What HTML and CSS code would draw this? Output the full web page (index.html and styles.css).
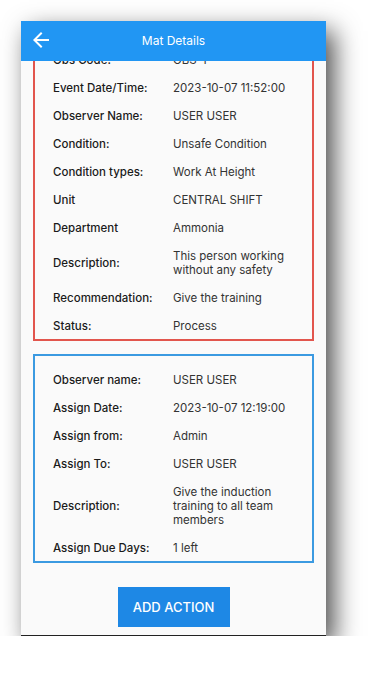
FILE: index.html
```html
<!DOCTYPE html>
<html>
<head>
    <meta charset="UTF-8">
    <title>Mat Details</title>
    <link rel="stylesheet" href="styles.css">
</head>
<body>
    <div class="phone">
        <div class="app-bar">
            <svg class="back" viewBox="0 0 24 24" width="24" height="24">
                <path d="M20 11H7.83l5.59-5.59L12 4l-8 8 8 8 1.41-1.41L7.83 13H20v-2z" fill="#fff"/>
            </svg>
            <span class="title">Mat Details</span>
        </div>
        <div class="content">
            <div class="scroll">
                <div class="card card-red">
                    <div class="row"><span class="label">Obs Code:</span><span class="value">OBS-1</span></div>
                    <div class="row"><span class="label">Event Date/Time:</span><span class="value">2023-10-07 11:52:00</span></div>
                    <div class="row"><span class="label">Observer Name:</span><span class="value">USER USER</span></div>
                    <div class="row"><span class="label">Condition:</span><span class="value">Unsafe Condition</span></div>
                    <div class="row"><span class="label">Condition types:</span><span class="value">Work At Height</span></div>
                    <div class="row"><span class="label">Unit</span><span class="value">CENTRAL SHIFT</span></div>
                    <div class="row"><span class="label">Department</span><span class="value">Ammonia</span></div>
                    <div class="row"><span class="label">Description:</span><span class="value">This person working without any safety</span></div>
                    <div class="row"><span class="label">Recommendation:</span><span class="value">Give the training</span></div>
                    <div class="row"><span class="label">Status:</span><span class="value">Process</span></div>
                </div>
                <div class="card card-blue">
                    <div class="row"><span class="label">Observer name:</span><span class="value">USER USER</span></div>
                    <div class="row"><span class="label">Assign Date:</span><span class="value">2023-10-07 12:19:00</span></div>
                    <div class="row"><span class="label">Assign from:</span><span class="value">Admin</span></div>
                    <div class="row"><span class="label">Assign To:</span><span class="value">USER USER</span></div>
                    <div class="row"><span class="label">Description:</span><span class="value">Give the induction training to all team members</span></div>
                    <div class="row"><span class="label">Assign Due Days:</span><span class="value">1 left</span></div>
                </div>
                <div class="actions">
                    <button class="add-btn">ADD ACTION</button>
                </div>
            </div>
        </div>
    </div>
</body>
</html>
```

FILE: styles.css
```css
body { margin: 0; background: #fff; font-family: Inter, "Liberation Sans", sans-serif; }

.phone {
    width: 305px;
    height: 614px;
    margin: 21px 0 0 21px;
    background: #fafafa;
    border-bottom: 1px solid #222;
    box-shadow: 8px 10px 24px rgba(0,0,0,0.7);
    display: flex;
    flex-direction: column;
    overflow: hidden;
}

.app-bar {
    height: 40px;
    flex-shrink: 0;
    background: #2196f3;
    display: flex;
    align-items: center;
    justify-content: center;
    position: relative;
}
.app-bar .back { position: absolute; left: 8px; top: 7px; }
.app-bar .title { color: #fff; font-size: 12px; margin-top: -2px; }

.content { flex: 1; overflow: hidden; }
/* list is scrolled a little, the top of the first card sits under the bar */
.scroll { margin-top: -27px; }

.card {
    margin: 0 12px;
    padding: 9px 18px 0 18px;
    border: 2px solid;
}
.card-red { border-color: #e2554d; }
.card-blue { border-color: #3b9ae1; margin-top: 13px; }

.row {
    display: grid;
    grid-template-columns: 120px 120px;
    align-items: center;
    padding: 8px 0 6px 0;
    font-size: 11.5px;
    line-height: 14px;
}
.label { color: #1a1a1a; font-weight: 500; }
.value { color: #333; }

.actions { display: flex; justify-content: center; padding-top: 24px; }
.add-btn {
    width: 112px;
    height: 40px;
    border: none;
    background: #1e88e5;
    color: #fff;
    font-family: Inter, "Liberation Sans", sans-serif;
    font-size: 13px;
    font-weight: 500;
}
```
